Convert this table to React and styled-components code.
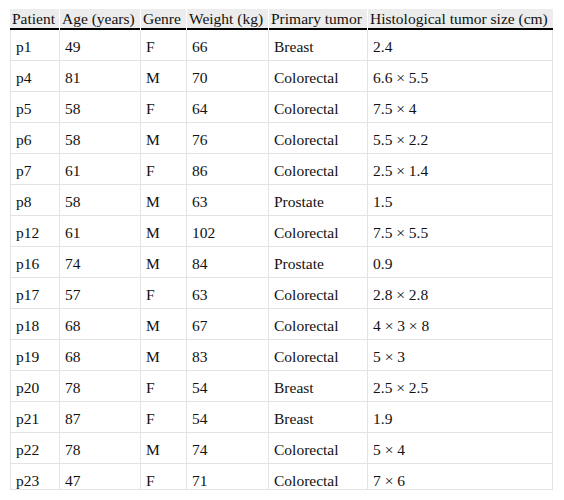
import React from "react";
import styled, { createGlobalStyle } from "styled-components";

const GlobalStyle = createGlobalStyle`
  html, body { margin: 0; padding: 0; background: #fff; }
  body { font-family: "Liberation Serif", "Times New Roman", serif; color: #111; }
`;

const Page = styled.div`
  padding: 9px 0 0 10px;
`;

const Clip = styled.div`
  width: 543px;
  height: 480px;
  overflow: hidden;
  border-bottom: 1px solid #e3e3e3;
`;

const Table = styled.table`
  width: 543px;
  table-layout: fixed;
  border-collapse: separate;
  border-spacing: 0;
  font-size: 15.5px;
`;

const Th = styled.th`
  box-sizing: border-box;
  width: ${(p) => p.$w}px;
  height: 21px;
  padding: 0 2px 2px;
  line-height: 19px;
  text-align: left;
  font-weight: normal;
  white-space: nowrap;
  background: linear-gradient(#000, #000) bottom / 100% 2px no-repeat, #ececec;
  border-right: 1px solid #fff;
  &:last-child { border-right: none; }
`;

const Td = styled.td`
  box-sizing: border-box;
  height: 31px;
  padding: 3px 5px 0;
  white-space: nowrap;
  border-right: 1px solid #e3e3e3;
  border-bottom: 1px solid #e3e3e3;
  &:first-child { border-left: 1px solid #e3e3e3; }
`;

const columns = [
  { label: "Patient", w: 50 },
  { label: "Age (years)", w: 81 },
  { label: "Genre", w: 46 },
  { label: "Weight (kg)", w: 82 },
  { label: "Primary tumor", w: 99 },
  { label: "Histological tumor size (cm)", w: 185 },
];

const rows = [
  ["p1", "49", "F", "66", "Breast", "2.4"],
  ["p4", "81", "M", "70", "Colorectal", "6.6 × 5.5"],
  ["p5", "58", "F", "64", "Colorectal", "7.5 × 4"],
  ["p6", "58", "M", "76", "Colorectal", "5.5 × 2.2"],
  ["p7", "61", "F", "86", "Colorectal", "2.5 × 1.4"],
  ["p8", "58", "M", "63", "Prostate", "1.5"],
  ["p12", "61", "M", "102", "Colorectal", "7.5 × 5.5"],
  ["p16", "74", "M", "84", "Prostate", "0.9"],
  ["p17", "57", "F", "63", "Colorectal", "2.8 × 2.8"],
  ["p18", "68", "M", "67", "Colorectal", "4 × 3 × 8"],
  ["p19", "68", "M", "83", "Colorectal", "5 × 3"],
  ["p20", "78", "F", "54", "Breast", "2.5 × 2.5"],
  ["p21", "87", "F", "54", "Breast", "1.9"],
  ["p22", "78", "M", "74", "Colorectal", "5 × 4"],
  ["p23", "47", "F", "71", "Colorectal", "7 × 6"],
];

export default function App() {
  return (
    <>
      <GlobalStyle />
      <Page>
        <Clip>
          <Table>
            <thead>
              <tr>
                {columns.map((c) => (
                  <Th key={c.label} $w={c.w}>{c.label}</Th>
                ))}
              </tr>
            </thead>
            <tbody>
              {rows.map((r) => (
                <tr key={r[0]}>
                  {r.map((v, i) => (
                    <Td key={i}>{v}</Td>
                  ))}
                </tr>
              ))}
            </tbody>
          </Table>
        </Clip>
      </Page>
    </>
  );
}
